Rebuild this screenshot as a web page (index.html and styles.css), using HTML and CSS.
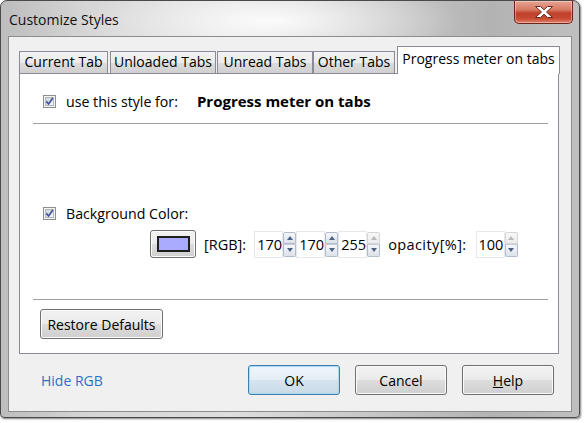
FILE: index.html
```html
<!DOCTYPE html>
<html>
<head>
<meta charset="utf-8">
<link rel="stylesheet" href="styles.css">
</head>
<body>
<div class="window">
  <div class="titlebar">
    <span class="title">Customize Styles</span>
    <div class="close">
      <svg width="22" height="14" viewBox="0 0 22 14"><path d="M2.5 1.5h5l3.5 3.3 3.5-3.3h5l-6 5.5 6 5.5h-5l-3.5-3.3-3.5 3.3h-5l6-5.5z" fill="#fff" stroke="#6b2a22" stroke-width="1" stroke-linejoin="round"/></svg>
    </div>
  </div>
  <div class="client">
    <div class="tabbox">
      <div class="tabs">
        <div class="tab t1">Current Tab</div>
        <div class="tab t2">Unloaded Tabs</div>
        <div class="tab t3">Unread Tabs</div>
        <div class="tab t4">Other Tabs</div>
        <div class="tab t5 selected">Progress meter on tabs</div>
      </div>
      <div class="panel">
        <div class="row row-use">
          <span class="cb"><svg width="13" height="13" viewBox="0 0 13 13"><rect x="0.5" y="0.5" width="12" height="12" fill="#f4f4f4" stroke="#8e8f8f"/><rect x="2.5" y="2.5" width="8" height="8" fill="url(#g1)" stroke="#b4b8be"/><defs><linearGradient id="g1" x1="0" y1="0" x2="1" y2="1"><stop offset="0" stop-color="#cbcfd5"/><stop offset="1" stop-color="#f7f7f7"/></linearGradient></defs><path d="M3.3 6.4l2.3 2.6 4.2-6" fill="none" stroke="#3e54a0" stroke-width="1.7"/></svg></span>
          <span class="label">use this style for:</span>
          <span class="target">Progress meter on tabs</span>
        </div>
        <div class="sep sep1"></div>
        <div class="row row-bg">
          <span class="cb"><svg width="13" height="13" viewBox="0 0 13 13"><rect x="0.5" y="0.5" width="12" height="12" fill="#f4f4f4" stroke="#8e8f8f"/><rect x="2.5" y="2.5" width="8" height="8" fill="url(#g2)" stroke="#b4b8be"/><defs><linearGradient id="g2" x1="0" y1="0" x2="1" y2="1"><stop offset="0" stop-color="#cbcfd5"/><stop offset="1" stop-color="#f7f7f7"/></linearGradient></defs><path d="M3.3 6.4l2.3 2.6 4.2-6" fill="none" stroke="#3e54a0" stroke-width="1.7"/></svg></span>
          <span class="label">Background Color:</span>
        </div>
        <div class="color-row">
          <div class="colorbtn"><span class="swatch"></span></div>
          <span class="rgb-label">[RGB]:</span>
          <div class="spin">
            <span class="field">170</span>
            <span class="arrows"><span class="up"></span><span class="down"></span></span>
          </div>
          <div class="spin">
            <span class="field">170</span>
            <span class="arrows"><span class="up"></span><span class="down"></span></span>
          </div>
          <div class="spin">
            <span class="field">255</span>
            <span class="arrows"><span class="up disabled"></span><span class="down"></span></span>
          </div>
          <span class="op-label">opacity[%]:</span>
          <div class="spin">
            <span class="field">100</span>
            <span class="arrows"><span class="up disabled"></span><span class="down"></span></span>
          </div>
        </div>
        <div class="sep sep2"></div>
        <div class="btn restore">Restore Defaults</div>
      </div>
    </div>
    <div class="footer">
      <span class="link">Hide RGB</span>
      <div class="actions">
        <div class="btn default">OK</div>
        <div class="btn">Cancel</div>
        <div class="btn"><u>H</u>elp</div>
      </div>
    </div>
  </div>
</div>
</body>
</html>
```
FILE: styles.css
```css
html, body {
  margin: 0;
  padding: 0;
  background: #ffffff;
}
body {
  width: 585px;
  height: 423px;
  overflow: hidden;
  font-family: "Open Sans", "Noto Sans", sans-serif;
  font-size: 14px;
  color: #000;
}
.window {
  box-sizing: border-box;
  width: 580px;
  height: 418px;
  border: 1px solid #4a4a4a;
  border-radius: 7px 7px 4px 4px;
  padding: 0 7px 5px 7px;
  background:
    radial-gradient(ellipse 190px 45px at 270px 20px, rgba(255,255,255,0.9), rgba(255,255,255,0) 100%),
    linear-gradient(to right, #bdbdbd 0%, #d6d6d6 15%, #dedede 40%, #c6c6c6 65%, #b3b3b3 85%, #bfbfbf 100%);
  box-shadow: 1px 1px 2px rgba(0,0,0,0.5);
}
.titlebar {
  height: 35px;
  display: flex;
  align-items: flex-start;
  justify-content: space-between;
}
.title {
  margin: 9px 0 0 1px;
  font-size: 14px;
  line-height: 20px;
  color: #111;
}
.close {
  box-sizing: border-box;
  width: 59px;
  height: 23px;
  margin-right: -1px;
  border: 1px solid #6e2418;
  border-top: none;
  border-radius: 0 0 5px 5px;
  background: linear-gradient(to bottom, #e8a493 0%, #d47a64 40%, #c0402a 55%, #c84b33 80%, #e2826a 100%);
  box-shadow: inset 0 0 0 1px rgba(255,255,255,0.35);
  display: flex;
  align-items: center;
  justify-content: center;
}
.client {
  box-sizing: border-box;
  height: 376px;
  border: 1px solid #8d8d8d;
  background: #f0f0f0;
  padding: 9px 12px 0 10px;
}
.tabs {
  display: flex;
  align-items: flex-end;
  height: 27px;
  position: relative;
  z-index: 1;
}
.tab {
  box-sizing: border-box;
  height: 22px;
  border: 1px solid #898c95;
  border-bottom: none;
  background: linear-gradient(to bottom, #f3f3f3 0%, #ebebeb 50%, #dddddd 51%, #cfcfcf 100%);
  font-size: 14px;
  line-height: 20px;
  text-align: center;
  white-space: nowrap;
}
.t1 { width: 89px; margin-right: 2px; }
.t2 { width: 106px; margin-right: 1px; }
.t3 { width: 96px; }
.t4 { width: 82px; margin-right: 2px; }
.t5 { width: 163px; }
.tab.selected {
  height: 28px;
  margin-bottom: -1px;
  background: #ffffff;
  line-height: 24px;
  margin-right: -1px;
}
.panel {
  box-sizing: border-box;
  width: 540px;
  height: 281px;
  border: 1px solid #898c95;
  background: #ffffff;
  padding: 17px 10px 0 13px;
  display: flex;
  flex-direction: column;
  align-items: flex-start;
}
.row {
  display: flex;
  align-items: center;
  height: 20px;
  padding-left: 10px;
}
.cb {
  display: flex;
  width: 13px;
  height: 13px;
  margin-right: 10px;
}
.label { font-size: 14.2px; }
.target {
  font-weight: bold;
  font-size: 15px;
  margin-left: 19px;
}
.sep {
  align-self: stretch;
  height: 1px;
  background: #a0a0a0;
}
.sep1 { margin-top: 12px; }
.row-bg { margin-top: 79px; }
.color-row {
  margin-top: 7px;
  margin-left: 117px;
  height: 28px;
  display: flex;
  align-items: center;
}
.colorbtn {
  box-sizing: border-box;
  width: 46px;
  height: 28px;
  border: 1px solid #707070;
  border-radius: 3px;
  background: linear-gradient(to bottom, #f2f2f2 0%, #ebebeb 50%, #dddddd 51%, #cfcfcf 100%);
  box-shadow: inset 0 0 0 1px #fcfcfc;
  display: flex;
  align-items: center;
  justify-content: center;
}
.swatch {
  box-sizing: border-box;
  width: 33px;
  height: 16px;
  border: 2px solid #1e1e1e;
  background: #aaaaff;
}
.rgb-label { margin: 0 8px 0 8px; font-size: 14.5px; }
.op-label { margin: 0 9px 0 8px; font-size: 14.5px; letter-spacing: 0.4px; }
.spin {
  display: flex;
  align-items: center;
}
.field {
  box-sizing: border-box;
  width: 29px;
  height: 27px;
  border: 1px solid #e6e8ec;
  background: #fff;
  padding-left: 2px;
  line-height: 25px;
  font-size: 14.5px;
}
.arrows {
  display: flex;
  flex-direction: column;
  width: 13px;
  height: 25px;
}
.up, .down {
  box-sizing: border-box;
  flex: 1;
  border: 1px solid #b3bccb;
  background: linear-gradient(to bottom, #f4f6f9, #dde2ea);
  display: flex;
  align-items: center;
  justify-content: center;
}
.up { border-radius: 2px 2px 0 0; }
.down { border-radius: 0 0 2px 2px; border-top-color: #c5ccd8; }
.up::after, .down::after {
  content: "";
  width: 0;
  height: 0;
  border-left: 3px solid transparent;
  border-right: 3px solid transparent;
}
.up::after { border-bottom: 4px solid #4d6185; }
.down::after { border-top: 4px solid #4d6185; }
.up.disabled {
  border-color: #d6d6d6;
  background: linear-gradient(to bottom, #f7f7f7, #ececec);
}
.up.disabled::after { border-bottom-color: #b8b8b8; }
.sep2 { margin-top: 41px; }
.btn {
  box-sizing: border-box;
  height: 30px;
  border: 1px solid #707070;
  border-radius: 3px;
  background: linear-gradient(to bottom, #f2f2f2 0%, #ebebeb 50%, #dddddd 51%, #cfcfcf 100%);
  box-shadow: inset 0 0 0 1px #fbfbfb;
  display: flex;
  align-items: center;
  justify-content: center;
  font-size: 14px;
  white-space: nowrap;
}
.restore {
  margin-top: 9px;
  margin-left: 7px;
  width: 123px;
}
.footer {
  margin-top: 11px;
  margin-left: -10px;
  margin-right: -12px;
  padding: 0 17px 0 32px;
  height: 30px;
  display: flex;
  align-items: center;
  justify-content: space-between;
}
.link {
  color: #2f6fc8;
  margin-top: 1px;
}
.actions {
  display: flex;
  gap: 15px;
}
.actions .btn { width: 92px; }
.btn.default {
  border-color: #3c7fb1;
  box-shadow: inset 0 0 0 1px #a9d8f2;
  background: linear-gradient(to bottom, #eef6fb 0%, #e4eef5 50%, #d6e4ee 51%, #c8dae7 100%);
}
```
